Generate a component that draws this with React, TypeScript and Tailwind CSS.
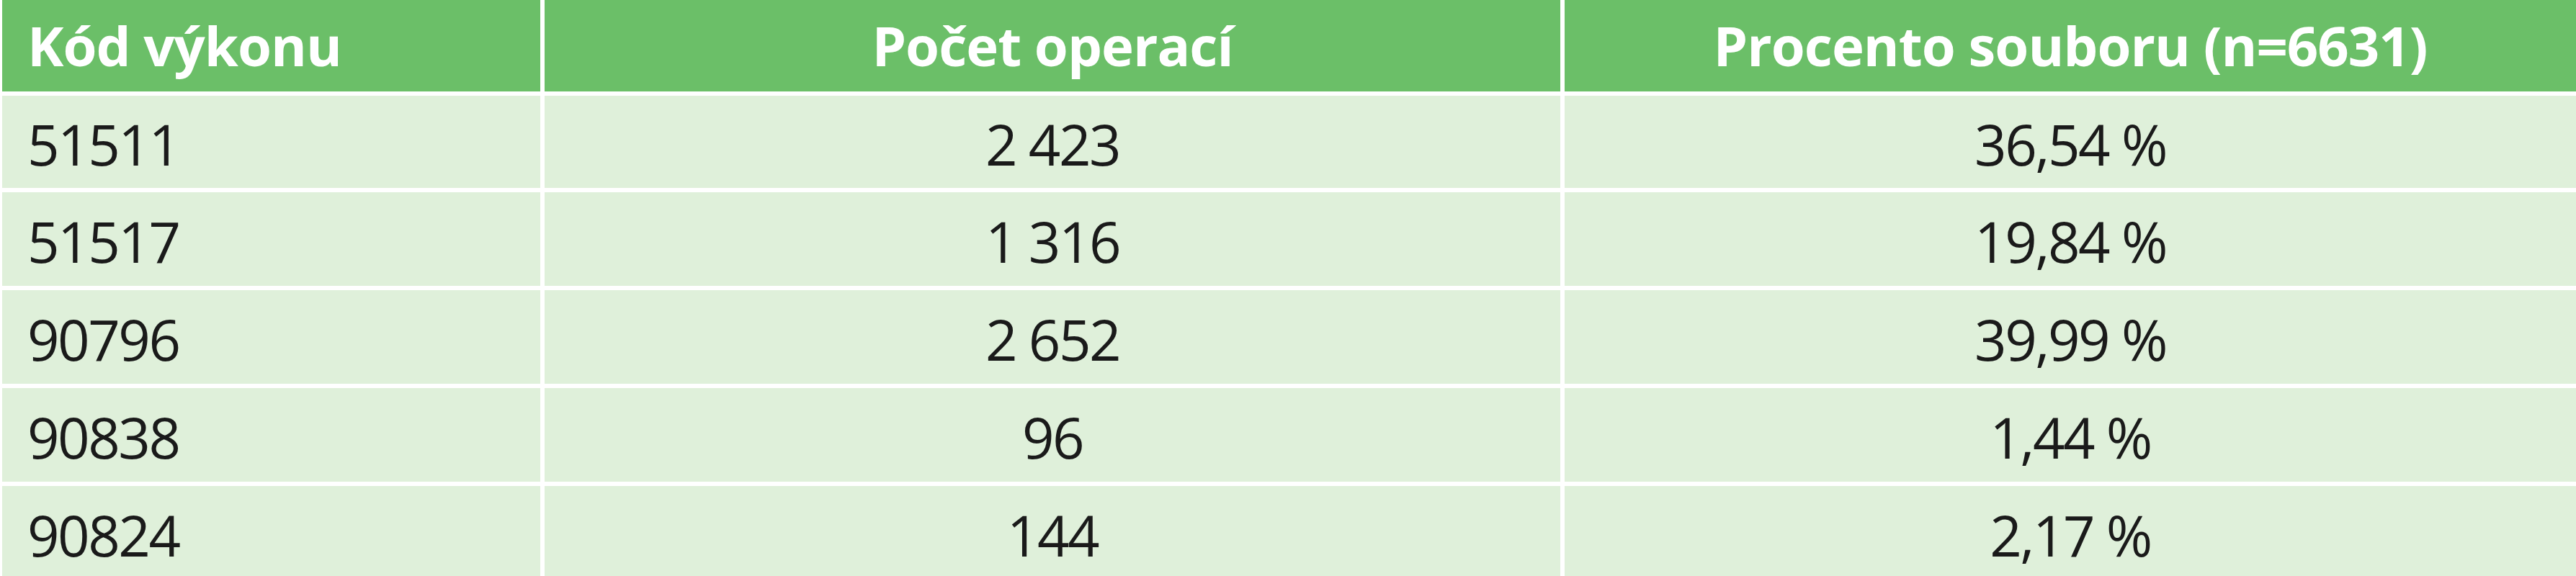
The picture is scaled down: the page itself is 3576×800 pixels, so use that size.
const rows = [
  { code: "51511", count: "2 423", pct: "36,54 %", h: "h-[128px]" },
  { code: "51517", count: "1 316", pct: "19,84 %", h: "h-[130px]" },
  { code: "90796", count: "2 652", pct: "39,99 %", h: "h-[130px]" },
  { code: "90838", count: "96", pct: "1,44 %", h: "h-[130px]" },
  { code: "90824", count: "144", pct: "2,17 %", h: "h-[130px]" },
];

export default function App() {
  return (
    <div className="h-[800px] w-[3576px] overflow-hidden bg-white pl-[3px] font-['Open_Sans','Noto_Sans',sans-serif]">
      <div className="grid grid-cols-[747px_1410px_1fr] gap-[6px]">
        <div className="flex h-[127px] items-center bg-[#6bbf68] pb-[2px] pl-[35px] text-[76px] font-bold leading-none tracking-[-1px] text-white">
          Kód výkonu
        </div>
        <div className="flex h-[127px] items-center justify-center bg-[#6bbf68] pb-[2px] text-[76px] font-bold leading-none tracking-[-1px] text-white">
          Počet operací
        </div>
        <div className="flex h-[127px] items-center justify-center bg-[#6bbf68] pb-[2px] text-[76px] font-bold leading-none tracking-[-1px] text-white">
          Procento souboru (n=6631)
        </div>
        {rows.map((r) => (
          <div key={r.code} className="contents">
            <div className={`flex ${r.h} items-center bg-[#dff0da] pl-[35px] pt-[6px] text-[78px] leading-none tracking-[-2.5px] text-[#1a1a1a]`}>
              {r.code}
            </div>
            <div className={`flex ${r.h} items-center justify-center bg-[#dff0da] pt-[6px] text-[78px] leading-none tracking-[-2.5px] text-[#1a1a1a]`}>
              {r.count}
            </div>
            <div className={`flex ${r.h} items-center justify-center bg-[#dff0da] pt-[6px] text-[78px] leading-none tracking-[-2.5px] text-[#1a1a1a]`}>
              {r.pct}
            </div>
          </div>
        ))}
      </div>
    </div>
  );
}
